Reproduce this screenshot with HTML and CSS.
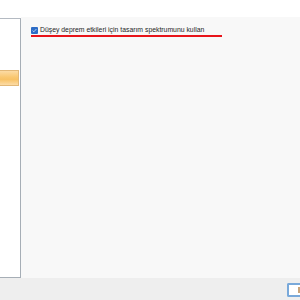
FILE: index.html
```html
<!DOCTYPE html>
<html>
<head>
<meta charset="utf-8">
<link rel="stylesheet" href="styles.css">
</head>
<body>
<div class="window">
  <div class="topband"></div>
  <div class="main">
    <div class="sidebar">
      <div class="side-btn"></div>
    </div>
    <div class="content">
      <div class="option">
        <span class="check">
          <svg width="7" height="7" viewBox="0 0 7 7"><path d="M1.6 3.6 L2.9 4.8 L5.4 2.0" fill="none" stroke="#cfe2fa" stroke-width="0.8"/></svg>
        </span>
        <span class="label">Düşey deprem etkileri için tasarım spektrumunu kullan</span>
      </div>
      <div class="redline"></div>
    </div>
  </div>
  <div class="footer">
    <div class="footer-btn"><span class="btn-icon"></span></div>
  </div>
</div>
</body>
</html>
```
FILE: styles.css
```css
html, body {
  margin: 0;
  padding: 0;
  background: #ffffff;
}
.window {
  width: 300px;
  height: 300px;
  display: flex;
  flex-direction: column;
  overflow: hidden;
  font-family: "Liberation Sans", Arial, sans-serif;
}
.topband {
  height: 17px;
  background: #ffffff;
  flex: none;
}
.main {
  height: 261px;
  display: flex;
  flex: none;
}
.sidebar {
  width: 21px;
  margin-top: 1px;
  background: #ffffff;
  border-top: 1px solid #b4bac2;
  border-right: 1px solid #a6aeb6;
  border-bottom: 1px solid #a6aeb6;
  box-sizing: border-box;
  padding-top: 51px;
  flex: none;
}
.side-btn {
  width: 19px;
  height: 16px;
  box-sizing: border-box;
  border: 1px solid #e2b878;
  border-left: none;
  background: linear-gradient(#fcdba4 0%, #f9c770 45%, #f8c266 60%, #fcdca6 100%);
}
.content {
  flex: 1;
  background: #f8f8f8;
  padding: 9px 0 0 10px;
}
.option {
  display: flex;
  align-items: center;
  height: 8px;
  gap: 2px;
}
.check {
  width: 7px;
  height: 7px;
  background: #2d6cc6;
  border-radius: 1px;
  display: flex;
}
.label {
  font-size: 6.85px;
  color: #1e1e1e;
  line-height: 8px;
  white-space: nowrap;
}
.redline {
  width: 191px;
  height: 2px;
  margin-top: 1px;
  background: #e8141a;
}
.footer {
  flex: 1;
  background: #eeeeee;
  display: flex;
  justify-content: flex-end;
  padding-top: 5px;
  box-sizing: border-box;
}
.footer-btn {
  width: 17px;
  height: 14px;
  margin-right: -4px;
  box-sizing: border-box;
  border: 2px solid #79a9da;
  border-right: none;
  border-radius: 2px 0 0 2px;
  background: #ffffff;
  display: flex;
  justify-content: flex-end;
  align-items: center;
}
.btn-icon {
  width: 3px;
  height: 6px;
  margin-right: 3px;
  background: #c9a47a;
}
```
